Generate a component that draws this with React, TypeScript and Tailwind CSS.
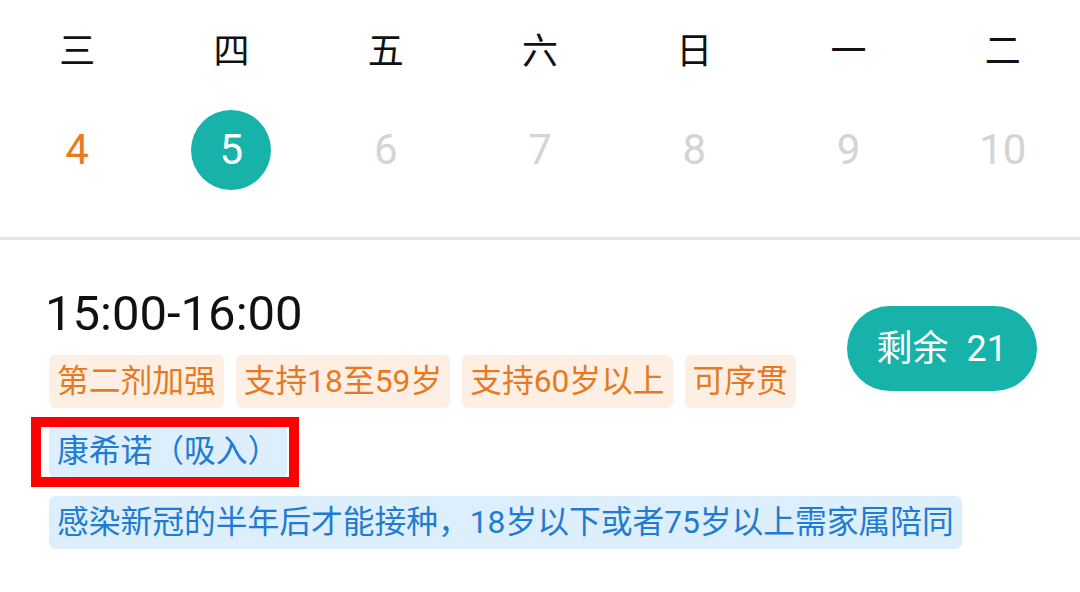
import React from "react";

const weekdays = ["三", "四", "五", "六", "日", "一", "二"];
const dates = [4, 5, 6, 7, 8, 9, 10];

const orangeTags = ["第二剂加强", "支持18至59岁", "支持60岁以上", "可序贯"];

const App = () => {
  return (
    <div
      className="w-[1080px] h-[592px] bg-white overflow-hidden"
      style={{ fontFamily: '"Roboto", "Noto Sans CJK SC", sans-serif' }}
    >
      {/* Week strip */}
      <div className="grid grid-cols-7">
        {weekdays.map((d) => (
          <div key={d} className="h-[104px] flex items-center justify-center text-[36px] leading-none text-[#111]">
            {d}
          </div>
        ))}
        {dates.map((n) => (
          <div key={n} className="h-[92px] flex items-center justify-center">
            {n === 5 ? (
              <div className="w-[80px] h-[80px] rounded-full bg-[#17b2a9] flex items-center justify-center text-[42px] leading-none text-white">
                {n}
              </div>
            ) : (
              <span className={`text-[42px] leading-none ${n === 4 ? "text-[#ec7a1f]" : "text-[#d4d4d4]"}`}>
                {n}
              </span>
            )}
          </div>
        ))}
      </div>

      <div className="mt-[41px] h-[3px] bg-[#e6e6e6]" />

      {/* Slot card */}
      <div className="pl-[49px] pr-[43px] pt-[49px]">
        <div className="flex items-center justify-between">
          <div className="flex flex-col">
            <div className="-ml-[4px] text-[49px] leading-none text-[#111] h-[49px]">15:00-16:00</div>
            <div className="mt-[17px] flex gap-3">
              {orangeTags.map((t) => (
                <span
                  key={t}
                  className="h-[53px] px-2 flex items-center rounded-[6px] bg-[#fdefe3] text-[#e67a22] text-[31.75px] leading-none"
                >
                  {t}
                </span>
              ))}
            </div>
          </div>
          <div className="h-[85px] px-[30px] rounded-full bg-[#17b2a9] flex items-center text-white text-[36px] leading-none">
            <span>剩余</span>
            <span className="ml-[18px]">21</span>
          </div>
        </div>

        <div className="flex flex-col items-start">
          <div className="relative mt-[17px]">
            <span className="h-[53px] px-2 flex items-center rounded-[6px] bg-[#ddeefc] text-[#1f7cd0] text-[31.75px] leading-none">
              康希诺（吸入）
            </span>
            {/* annotation box */}
            <div className="absolute -left-[18px] -top-[8px] -right-[12px] -bottom-[9px] border-[10px] border-[#ff0000]" />
          </div>
          <span className="mt-[18px] h-[53px] px-2 flex items-center rounded-[6px] bg-[#ddeefc] text-[#1f7cd0] text-[31.75px] leading-none">
            感染新冠的半年后才能接种，18岁以下或者75岁以上需家属陪同
          </span>
        </div>
      </div>
    </div>
  );
};

export default App;
